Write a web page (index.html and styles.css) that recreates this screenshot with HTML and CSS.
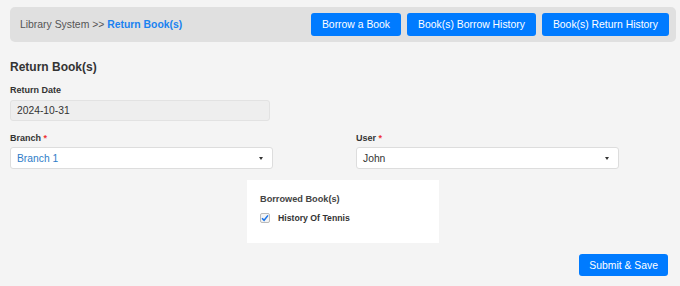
FILE: index.html
```html
<!DOCTYPE html>
<html lang="en">
<head>
    <meta charset="UTF-8">
    <meta name="viewport" content="width=device-width, initial-scale=1.0">
    <title>Return Book(s)</title>
    <link rel="stylesheet" href="styles.css">
</head>
<body>
    <div class="topbar">
        <div class="crumbs">Library System &gt;&gt; <span class="current">Return Book(s)</span></div>
        <div class="nav">
            <button class="btn">Borrow a Book</button>
            <button class="btn">Book(s) Borrow History</button>
            <button class="btn">Book(s) Return History</button>
        </div>
    </div>

    <form class="form">
        <h2 class="title">Return Book(s)</h2>

        <div class="field">
            <label class="label">Return Date</label>
            <input class="input date" type="text" value="2024-10-31" readonly>
        </div>

        <div class="row">
            <div class="field">
                <label class="label">Branch <span class="req">*</span></label>
                <div class="select branch">
                    <span>Branch 1</span>
                    <span class="caret"></span>
                </div>
            </div>
            <div class="field">
                <label class="label">User <span class="req">*</span></label>
                <div class="select">
                    <span>John</span>
                    <span class="caret"></span>
                </div>
            </div>
        </div>

        <div class="books">
            <div class="books-title">Borrowed Book(s)</div>
            <label class="book">
                <span class="check">
                    <svg width="8" height="8" viewBox="0 0 8 8"><path d="M1 4.2 L3.1 6.3 L7 1.4" fill="none" stroke="#1a73e8" stroke-width="1.5"/></svg>
                </span>
                History Of Tennis
            </label>
        </div>

        <div class="actions">
            <button type="button" class="btn">Submit &amp; Save</button>
        </div>
    </form>
</body>
</html>
```

FILE: styles.css
```css
body {
    margin: 0;
    padding: 7px 4px 0 10px;
    background: #f4f4f4;
    font-family: "Liberation Sans", Arial, sans-serif;
    color: #333;
}

.topbar {
    display: flex;
    justify-content: space-between;
    align-items: center;
    height: 35px;
    padding: 0 7px 0 10px;
    background: #e0e0e0;
    border-radius: 5px;
}

.crumbs {
    font-size: 10.4px;
    color: #555;
}

.current {
    color: #1a82f0;
    font-weight: bold;
}

.nav {
    display: flex;
    gap: 6px;
}

.btn {
    height: 23px;
    padding: 0 11px;
    border: none;
    border-radius: 3px;
    background: #007bff;
    color: #fff;
    font-family: inherit;
    font-size: 10.4px;
}

.form {
    padding-top: 18px;
}

.title {
    margin: 0 0 11px;
    font-size: 12px;
    line-height: 14px;
    font-weight: bold;
    color: #333;
}

.field {
    display: flex;
    flex-direction: column;
    margin-bottom: 12px;
}

.label {
    font-size: 9px;
    line-height: 10px;
    font-weight: bold;
    color: #333;
    margin-bottom: 5px;
}

.row .label {
    margin-bottom: 4px;
}

.req {
    color: #e33;
}

.input {
    box-sizing: border-box;
    width: 260px;
    height: 21px;
    padding: 0 6px;
    border: 1px solid #e2e2e2;
    border-radius: 3px;
    background: #eeeeee;
    font-family: inherit;
    font-size: 10.3px;
    color: #333;
}

.row {
    display: grid;
    grid-template-columns: 346px 346px;
}

.row .field {
    margin-bottom: 11px;
}

.select {
    box-sizing: border-box;
    display: flex;
    justify-content: space-between;
    align-items: center;
    width: 263px;
    height: 22px;
    padding: 0 9px 0 6px;
    border: 1px solid #ddd;
    border-radius: 3px;
    background: #fff;
    font-size: 10.3px;
    color: #333;
}

.branch {
    color: #2f7dc8;
}

.caret {
    width: 0;
    height: 0;
    border-left: 2.5px solid transparent;
    border-right: 2.5px solid transparent;
    border-top: 3px solid #333;
}

.books {
    box-sizing: border-box;
    width: 192px;
    height: 63px;
    margin-left: 237px;
    padding: 14px 13px 0;
    background: #fff;
}

.books-title {
    font-size: 9.2px;
    line-height: 10px;
    font-weight: bold;
    color: #444;
    margin-bottom: 9px;
}

.book {
    display: flex;
    align-items: center;
    gap: 8px;
    font-size: 8.7px;
    line-height: 10px;
    font-weight: bold;
    color: #333;
}

.check {
    box-sizing: border-box;
    display: flex;
    align-items: center;
    justify-content: center;
    width: 10px;
    height: 10px;
    border: 1px solid #bbb;
    border-radius: 2px;
    background: #f4f4f4;
}

.actions {
    display: flex;
    justify-content: flex-end;
    padding: 11px 8px 0 0;
}

.actions .btn {
    height: 22px;
    padding: 0 10px;
}
```
